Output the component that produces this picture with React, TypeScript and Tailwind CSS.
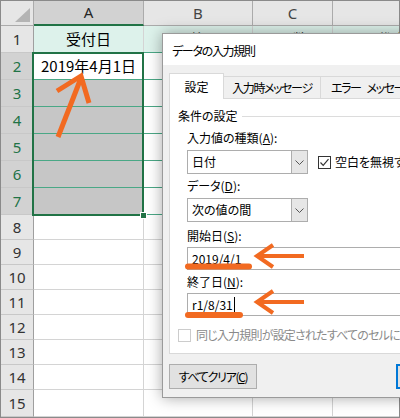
import React from 'react';

const ORANGE = '#f26a21';

type RowDef = { n: number; tall: boolean };

const rows: RowDef[] = [
  { n: 1, tall: true },
  { n: 2, tall: true },
  { n: 3, tall: true },
  { n: 4, tall: true },
  { n: 5, tall: true },
  { n: 6, tall: true },
  { n: 7, tall: true },
  { n: 8, tall: false },
  { n: 9, tall: false },
  { n: 10, tall: false },
  { n: 11, tall: false },
  { n: 12, tall: false },
  { n: 13, tall: false },
  { n: 14, tall: false },
  { n: 15, tall: false },
];

const HeaderRow: React.FC = () => (
  <div className="flex h-[25px] shrink-0 font-['Noto_Sans',sans-serif] text-[15px] text-[#444]">
    <div className="relative w-[33px] shrink-0 bg-[#e6e6e6] border-r border-b border-[#ababab]">
      <svg className="absolute right-[2px] bottom-[2px]" width="16" height="15" viewBox="0 0 16 15">
        <path d="M15 0 V14 H0 Z" fill="#b4b4b4" />
      </svg>
    </div>
    <div className="w-[110px] shrink-0 bg-[#d2d2d2] border-r border-r-[#ababab] border-b-2 border-b-[#217346] flex items-center justify-center text-[#262626]">A</div>
    <div className="w-[109px] shrink-0 bg-[#e6e6e6] border-r border-b border-[#ababab] flex items-center justify-center">B</div>
    <div className="w-[80px] shrink-0 bg-[#e6e6e6] border-r border-b border-[#ababab] flex items-center justify-center">C</div>
    <div className="flex-1 bg-[#e6e6e6] border-b border-[#ababab]" />
  </div>
);

const SheetRow: React.FC<{ r: RowDef; last: boolean }> = ({ r, last }) => {
  const selected = r.n >= 2 && r.n <= 7;
  const table = r.n <= 7;
  const line = table ? 'border-b-[#4aa886]' : 'border-b-[#d4d4d4]';
  const fillA = r.n === 1 ? 'bg-[#ddf2eb]' : r.n === 2 ? 'bg-white' : selected ? 'bg-[#c6c6c6]' : 'bg-white';
  const fillOther = r.n === 1 ? 'bg-[#ddf2eb]' : 'bg-white';
  return (
    <div className={`flex ${last ? 'flex-1' : r.tall ? 'h-[27px]' : 'h-[25px]'} shrink-0 font-['Noto_Sans_CJK_JP',sans-serif] text-[15px] text-black`}>
      <div
        className={`w-[33px] shrink-0 border-r border-r-[#9f9f9f] border-b border-b-[#c8c8c8] flex items-center justify-center font-['Noto_Sans',sans-serif] ${
          selected ? 'bg-[#d2d2d2] text-[#217346]' : 'bg-[#e6e6e6] text-[#333]'
        }`}
      >
        {r.n}
      </div>
      <div className={`w-[110px] shrink-0 border-r border-r-[#d4d4d4] border-b ${line} ${fillA} flex items-center justify-center whitespace-nowrap`}>
        {r.n === 1 ? '受付日' : r.n === 2 ? '2019年4月1日' : ''}
      </div>
      <div className={`w-[109px] shrink-0 border-r border-r-[#d4d4d4] border-b ${line} ${fillOther} flex items-center justify-center whitespace-nowrap`}>
        {r.n === 1 ? '予約日' : ''}
      </div>
      <div className={`w-[80px] shrink-0 border-r border-r-[#d4d4d4] border-b ${line} ${fillOther} flex items-center justify-center whitespace-nowrap`}>
        {r.n === 1 ? '人数' : ''}
      </div>
      <div className={`flex-1 border-b ${line} ${fillOther} flex items-center pl-[44px] whitespace-nowrap overflow-hidden`}>
        {r.n === 1 ? '代表者' : ''}
      </div>
    </div>
  );
};

const Select: React.FC<{ value: string }> = ({ value }) => (
  <div className="w-[121px] h-[24px] shrink-0 border border-[#adadad] bg-white flex">
    <div className="flex-1 flex items-center pl-[4px]">{value}</div>
    <div className="w-[16px] bg-[#e6e6e6] border-l border-[#adadad] flex items-center justify-center">
      <svg width="9" height="5" viewBox="0 0 9 5">
        <path d="M0.5 0.5 L4.5 4.5 L8.5 0.5" fill="none" stroke="#555" strokeWidth="1" />
      </svg>
    </div>
  </div>
);

const Checkbox: React.FC<{ checked?: boolean; disabled?: boolean }> = ({ checked, disabled }) => (
  <div className={`w-[13px] h-[13px] shrink-0 bg-white border ${disabled ? 'border-[#cccccc]' : 'border-[#333]'} flex items-center justify-center`}>
    {checked && (
      <svg width="11" height="11" viewBox="0 0 11 11">
        <path d="M1.5 5.5 L4.2 8.3 L9.5 2.2" fill="none" stroke="#333" strokeWidth="1.2" />
      </svg>
    )}
  </div>
);

const Dialog: React.FC = () => (
  <div className="absolute left-[162px] top-[33px] w-[280px] h-[365px] border border-[#9a9a9a] bg-[#f0f0f0] shadow-[0_0_14px_rgba(0,0,0,0.35)] flex flex-col font-['Noto_Sans_CJK_JP',sans-serif] text-[12px] leading-[16px] [font-feature-settings:'palt'] text-black">
    <div className="h-[31px] shrink-0 bg-white flex items-center pl-[9px] pt-[2px] tracking-[-1.3px]">データの入力規則</div>
    <div className="px-[6px] pt-[8px]">
      <div className="flex items-end h-[25px]">
        <div className="relative z-10 w-[55px] h-[26px] -mb-px bg-white border border-b-0 border-[#d9d9d9] flex items-center justify-center">設定</div>
        <div className="w-[97px] h-[22px] border-t border-r border-[#d9d9d9] flex items-center justify-center whitespace-nowrap tracking-[-1.4px]">入力時メッセージ</div>
        <div className="w-[110px] h-[22px] border-t border-r border-[#d9d9d9] flex items-center gap-[6px] pl-[10px] whitespace-nowrap tracking-[-1.4px]">
          <span>エラー</span>
          <span>メッセージ</span>
        </div>
      </div>
      <div className="h-[256px] bg-white border border-[#d9d9d9] pt-[9px] pl-[8px]">
        <div className="flex items-center h-[16px] gap-[4px]">
          <span className="whitespace-nowrap">条件の設定</span>
          <div className="flex-1 h-px bg-[#dcdcdc]" />
        </div>
        <div className="pl-[9px]">
          <div className="mt-[6px] h-[16px] whitespace-nowrap">
            入力値の種類(<span className="underline">A</span>):
          </div>
          <div className="mt-[4px] flex items-center">
            <Select value="日付" />
            <div className="ml-[10px] flex items-center gap-[4px] whitespace-nowrap">
              <Checkbox checked />
              <span>空白を無視する(B)</span>
            </div>
          </div>
          <div className="mt-[4px] h-[16px] whitespace-nowrap">
            データ(<span className="underline">D</span>):
          </div>
          <div className="mt-[4px] flex">
            <Select value="次の値の間" />
          </div>
          <div className="mt-[6px] h-[16px] whitespace-nowrap">
            開始日(<span className="underline">S</span>):
          </div>
          <div className="mt-[3px] w-[280px] h-[23px] border border-[#adadad] bg-white flex items-center pl-[4px]">2019/4/1</div>
          <div className="mt-[4px] h-[16px] whitespace-nowrap">
            終了日(<span className="underline">N</span>):
          </div>
          <div className="mt-[3px] w-[280px] h-[23px] border border-[#adadad] bg-white flex items-center pl-[4px]">
            <span>r1/8/31</span>
            <span className="ml-px w-px h-[15px] bg-black" />
          </div>
        </div>
        <div className="mt-[11px] flex items-center gap-[5px] whitespace-nowrap text-[#8a8a8a]">
          <Checkbox disabled />
          <span className="tracking-[-0.8px]">同じ入力規則が設定されたすべてのセルに変更を適用する</span>
        </div>
      </div>
      <div className="mt-[10px] flex">
        <div className="w-[88px] h-[25px] shrink-0 bg-[#e1e1e1] border border-[#adadad] flex items-center justify-center whitespace-nowrap tracking-[-1.3px]">
          すべてクリア(<span className="underline">C</span>)
        </div>
        <div className="ml-[139px] w-[80px] h-[25px] shrink-0 bg-[#e1e1e1] border-2 border-[#0078d7] flex items-center justify-center">OK</div>
      </div>
    </div>
  </div>
);

const Marks: React.FC = () => (
  <svg className="absolute left-0 top-0 pointer-events-none" width="400" height="418" viewBox="0 0 400 418">
    <g stroke={ORANGE} fill="none" strokeWidth="5">
      <line x1="58" y1="137" x2="81" y2="78" />
      <polyline points="57,91 81,76 89,103" strokeLinejoin="miter" />
    </g>
    <g stroke={ORANGE} fill="none" strokeWidth="4">
      <line x1="304" y1="256" x2="258" y2="256" />
      <polyline points="273,245 257,256 273,267" />
      <line x1="304" y1="302" x2="258" y2="302" />
      <polyline points="273,291 257,302 273,313" />
    </g>
    <rect x="185" y="263.5" width="67" height="6" rx="3" fill={ORANGE} />
    <rect x="185" y="312" width="58" height="6" rx="3" fill={ORANGE} />
  </svg>
);

export default function App() {
  return (
    <div className="relative w-[400px] h-[418px] overflow-hidden bg-white">
      <div className="w-full h-full border border-[#8a8a8a] flex flex-col">
        <HeaderRow />
        {rows.map((r, i) => (
          <SheetRow key={r.n} r={r} last={i === rows.length - 1} />
        ))}
      </div>
      {/* selected range A2:A7 */}
      <div className="absolute left-[32px] top-[52px] w-[112px] h-[164px] border-2 border-[#217346]" />
      <div className="absolute left-[140px] top-[212px] w-[7px] h-[7px] bg-[#217346] border border-white" />
      <Dialog />
      <Marks />
    </div>
  );
}
